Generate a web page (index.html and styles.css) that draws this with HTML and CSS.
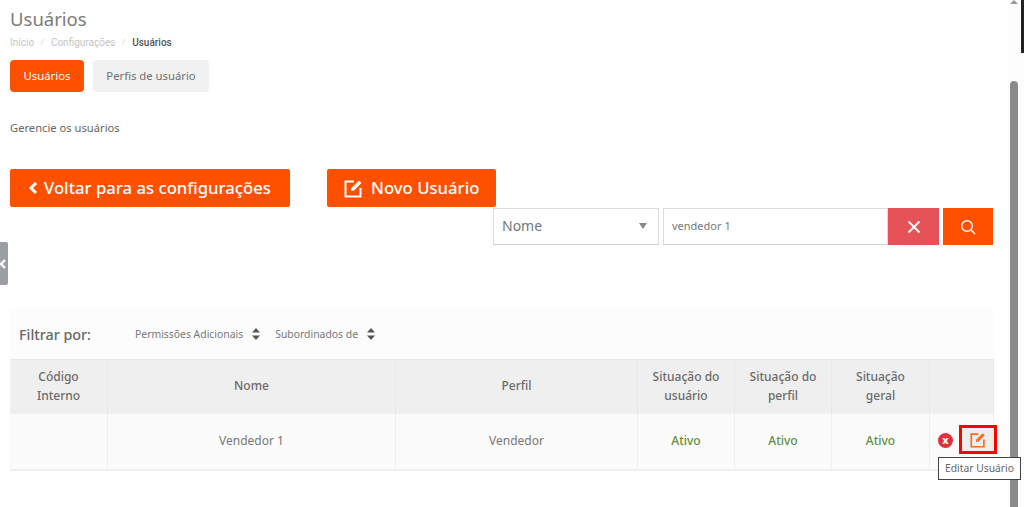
FILE: index.html
```html
<!DOCTYPE html>
<html lang="pt-BR">
<head>
<meta charset="utf-8">
<title>Usuários</title>
<link rel="stylesheet" href="styles.css">
</head>
<body>
<div class="handle"><svg width="8" height="12" viewBox="0 0 8 12"><path d="M5 2 L1 6 L5 10" fill="none" stroke="#fff" stroke-width="2.400"/></svg></div>
<main class="page">
  <h1 class="title">Usuários</h1>
  <nav class="crumbs"><span>Início</span><i>/</i><span>Configurações</span><i>/</i><b>Usuários</b></nav>
  <div class="tabs"><a class="tab active">Usuários</a><a class="tab second">Perfis de usuário</a></div>
  <p class="lead">Gerencie os usuários</p>
  <div class="actions">
    <a class="btn back"><svg width="10" height="14" viewBox="0 0 10 14"><path d="M8 2 L3 7 L8 12" fill="none" stroke="#fff" stroke-width="3"/></svg>Voltar para as configurações</a>
    <a class="btn new"><svg width="19" height="19" viewBox="0 0 19 19"><path d="M10 2.500H1.500V17.500H16.500V9" fill="none" stroke="#fff" stroke-width="2"/><path d="M7 12 L7.500 9 L15 1.500 L17.500 4 L10 11.500 Z" fill="#fff"/></svg>Novo Usuário</a>
  </div>
  <div class="search">
    <div class="select"><span>Nome</span><em></em></div>
    <div class="input">vendedor 1</div>
    <a class="sq clear"><svg width="14" height="14" viewBox="0 0 14 14"><path d="M1.500 1.500 L12.500 12.500 M12.500 1.500 L1.500 12.500" stroke="#fff" stroke-width="1.800"/></svg></a>
    <a class="sq go"><svg width="16" height="16" viewBox="0 0 16 16"><circle cx="7" cy="7" r="5.300" fill="none" stroke="#fff" stroke-width="1.400"/><path d="M11 11 L15 15" stroke="#fff" stroke-width="1.500"/></svg></a>
  </div>
  <div class="filters">
    <strong>Filtrar por:</strong>
    <span class="f f1">Permissões Adicionais<svg width="8" height="12" viewBox="0 0 8 12"><path d="M4 0 L8 4.500 H0 Z M4 12 L8 7.500 H0 Z" fill="#555"/></svg></span>
    <span class="f">Subordinados de<svg width="8" height="12" viewBox="0 0 8 12"><path d="M4 0 L8 4.500 H0 Z M4 12 L8 7.500 H0 Z" fill="#555"/></svg></span>
  </div>
  <table class="grid">
    <colgroup><col class="c1"><col class="c2"><col class="c3"><col class="c4"><col class="c5"><col class="c6"><col class="c7"></colgroup>
    <thead><tr><th>Código<br>Interno</th><th>Nome</th><th>Perfil</th><th>Situação do<br>usuário</th><th>Situação do<br>perfil</th><th>Situação<br>geral</th><th></th></tr></thead>
    <tbody><tr><td></td><td>Vendedor 1</td><td>Vendedor</td><td class="ok">Ativo</td><td class="ok">Ativo</td><td class="ok">Ativo</td>
      <td class="ops"><span class="x">x</span>
        <a class="edit"><svg width="16" height="16" viewBox="0 0 19 19"><path d="M10 2.500H1.500V17.500H16.500V9" fill="none" stroke="#ff6a1f" stroke-width="2"/><path d="M7 12 L7.500 9 L15 1.500 L17.500 4 L10 11.500 Z" fill="#ff6a1f"/></svg></a>
        <span class="tip">Editar Usuário</span></td></tr></tbody>
  </table>
</main>
<div class="bar"><i class="arrow"></i><i class="thumb"></i></div>
<i class="edge"></i>
</body>
</html>
```
FILE: styles.css
```css
* { box-sizing: border-box; }
html, body { margin: 0; height: 507px; overflow: hidden; background: #fff; }
body { font-family: "Noto Sans", "Open Sans", sans-serif; color: #666; position: relative; }
.page { padding: 8px 31px 0 10px; width: 1024px; }
.title { margin: 0; font-size: 18.500px; line-height: 22px; font-weight: 400; color: #7b7b7b; }
.crumbs { margin-top: 6px; height: 13px; font: 10px/13px "Roboto", sans-serif; color: #c4c4c4; display: flex; }
.crumbs i { margin: 0 7px; font-size: 7px; }
.crumbs b { font-weight: 500; color: #555; }
.tabs { display: flex; gap: 9px; margin-top: 11px; }
.tab { width: 74px; height: 32px; border-radius: 4px; background: #f1f1f1; color: #707070; font-size: 11.300px; line-height: 32px; text-align: center; }
.second { width: 116px; }
.active { background: #ff5000; color: #fff; }
.lead { margin: 29px 0 0; font-size: 11.200px; line-height: 14px; color: #666; }
.actions { display: flex; gap: 37px; margin-top: 34px; }
.btn { height: 38px; border-radius: 2px; background: #ff5000; color: #fff; font-size: 16.700px; font-weight: 500; line-height: 38px; display: flex; align-items: center; gap: 6px; }
.back { width: 280px; padding-left: 18px; }
.new { width: 169px; padding-left: 17px; gap: 8px; }
.search { display: flex; justify-content: flex-end; height: 38px; padding-top: 1px; }
.select { width: 166px; height: 37px; border: 1px solid #dcdcdc; border-bottom-color: #ccc; display: flex; align-items: center; justify-content: space-between; padding: 0 11px 2px 8px; font-size: 14px; color: #777; }
.select em { border: 4px solid transparent; border-top: 6px solid #888; border-bottom: 0; }
.input { width: 225px; height: 37px; margin-left: 4px; border: 1px solid #dcdcdc; border-bottom-color: #ccc; padding: 0 8px; font-size: 11px; line-height: 34px; color: #777; }
.sq { height: 37px; display: flex; align-items: center; justify-content: center; }
.clear { width: 51px; background: #e55257; }
.go { width: 50px; margin-left: 4px; background: #ff5000; }
.filters { margin-top: 64px; width: 984px; height: 50px; background: #fcfcfc; display: flex; align-items: center; padding-left: 9px; font-size: 10.400px; color: #777; }
.filters strong { font-size: 14.300px; font-weight: 500; color: #666; width: 116px; }
.f { display: flex; align-items: center; gap: 9px; }
.f1 { margin-right: 15px; }
.grid { width: 984px; table-layout: fixed; border-collapse: separate; border-spacing: 0; font-size: 12px; text-align: center; }
.c1 { width: 98px; } .c2 { width: 288px; } .c3 { width: 242px; } .c4 { width: 97px; } .c5 { width: 97px; } .c6 { width: 98px; } .c7 { width: 64px; }
.grid th { height: 55px; padding: 0 0 2px; background: #efefef; border-right: 1px solid #e8e8e8; border-top: 1px solid #e8e8e8; font-weight: 500; line-height: 19.500px; color: #6b6b6b; }
.grid td { height: 57px; padding: 0 0 2px; background: #fbfbfb; border-right: 1px solid #efefef; border-bottom: 2px solid #efefef; color: #777; }
.grid .ok { color: #5e8f3e; font-weight: 500; }
.ops { position: relative; }
.x { position: absolute; left: 8px; top: 19px; width: 15px; height: 15px; border-radius: 50%; background: #e0303a; color: #fff; font-size: 11px; font-weight: 700; line-height: 14px; text-align: center; }
.edit { position: absolute; left: 29px; top: 11px; width: 38px; height: 29px; border: 3px solid #f00; background: #eee; display: flex; align-items: center; justify-content: center; }
.tip { position: absolute; z-index: 2; left: 8px; top: 43px; width: 83px; height: 23px; background: #fff; border: 1px solid #444; font-size: 10.300px; line-height: 21px; color: #666; white-space: nowrap; }
.handle { position: absolute; left: 0; top: 242px; width: 8px; height: 43px; background: #9b9ea3; border-radius: 0 2px 2px 0; display: flex; align-items: center; overflow: hidden; }
.bar { position: absolute; right: 0; top: 0; width: 17px; height: 507px; background: #fdfdfd; }
.arrow { position: absolute; left: 3px; top: 0; border: 4px solid transparent; border-top: 0; border-bottom: 4px solid #999; }
.thumb { position: absolute; left: 3px; top: 81px; width: 8px; height: 426px; background: #8a8a8a; border-radius: 4px 4px 0 0; }
.edge { position: absolute; right: 0; top: 0; width: 3px; height: 53px; background: #222; }
```
